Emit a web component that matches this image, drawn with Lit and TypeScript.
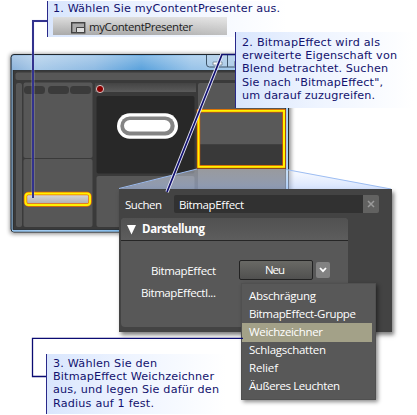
import { LitElement, html, css } from "lit";
import { customElement } from "lit/decorators.js";

const line = (text: string, width: number, kind = "") => html`
  <svg class="line ${kind}" width=${width + 2} height="18">
    <text x="0" y="13" textLength=${width}>${text}</text>
  </svg>`;

const menuItems: [string, number][] = [
  ["Abschrägung", 67],
  ["BitmapEffect-Gruppe", 107],
  ["Weichzeichner", 74],
  ["Schlagschatten", 77],
  ["Relief", 29],
  ["Äußeres Leuchten", 91],
];

@customElement("blend-window")
class BlendWindow extends LitElement {
  static styles = css`
    :host { display: block; }
    svg { display: block; overflow: visible; }
  `;
  render() {
    return html`<svg width="417" height="250" viewBox="0 0 417 250">
      <defs>
        <linearGradient id="glass">
          <stop offset="0" stop-color="#7da9d6" /><stop offset=".1" stop-color="#9fc4e6" />
          <stop offset=".3" stop-color="#82b3e0" /><stop offset=".47" stop-color="#4797d8" />
          <stop offset=".65" stop-color="#8cbce6" /><stop offset="1" stop-color="#a9cbe8" />
        </linearGradient>
        <linearGradient id="shine" x2="0" y2="1">
          <stop offset="0" stop-color="#fff" stop-opacity=".35" /><stop offset="1" stop-color="#fff" stop-opacity=".08" />
        </linearGradient>
        <linearGradient id="head" x2="0" y2="1">
          <stop offset="0" stop-color="#444" /><stop offset="1" stop-color="#5b5b5b" />
        </linearGradient>
        <linearGradient id="bar" x2="0" y2="1">
          <stop offset="0" stop-color="#ddd" /><stop offset="1" stop-color="#aaa" />
        </linearGradient>
        <linearGradient id="beam" x2="0" y2="1">
          <stop offset="0" stop-color="#f2f6ff" stop-opacity=".42" /><stop offset="1" stop-color="#b5cdfc" stop-opacity=".56" />
        </linearGradient>
        <filter id="soft" x="-10%" y="-10%" width="120%" height="120%"><feGaussianBlur stdDeviation="2" /></filter>
      </defs>
      <rect x="10" y="54" width="281" height="180" rx="3" fill="#000" opacity=".45" filter="url(#soft)" />
      <rect x="11" y="54.5" width="277.5" height="177.5" rx="3" fill="url(#glass)" stroke="#20262c" />
      <rect x="12" y="55.5" width="275.5" height="15.5" rx="2" fill="url(#shine)" />
      <path d="M12.5 70V231H287.5V70" fill="none" stroke="#a5d3fa" />
      <path d="M206.500 55v9q0 3 3 3h76v-12M227.500 55v12M249.500 55v12" fill="#b9d2e8" fill-opacity=".5" stroke="#3c5368" />
      <path d="M213 62h9v3h-9zM234.500 61.500h6v5h-6z" fill="#fff" stroke="#6c7d8e" stroke-width=".8" />
      <rect x="13" y="70.500" width="272.500" height="159" fill="#3a3a3a" stroke="#252525" stroke-width=".8" />
      <g fill="#575757">
        <rect x="15.500" y="72.500" width="269" height="7.500" rx="2" />
        <rect x="16" y="83" width="6" height="144" rx="2" />
        <rect x="23.500" y="82.500" width="69" height="75.500" rx="2" />
        <rect x="23.500" y="159" width="69" height="68" rx="2" />
        <rect x="96.500" y="176" width="98" height="51" rx="2" />
        <rect x="198" y="83" width="87" height="27" rx="2" />
        <rect x="198" y="169" width="87" height="30" />
      </g>
      <g fill="#3b3b3b">
        <rect x="24" y="86" width="21" height="8" rx="3.500" />
        <rect x="48" y="86" width="21" height="8" rx="3.500" />
        <rect x="70" y="86" width="21" height="8" rx="3.500" />
      </g>
      <rect x="95" y="83" width="101" height="9" fill="url(#head)" />
      <circle cx="100" cy="89" r="3.600" fill="#8a0000" stroke="#e3d3d3" stroke-width=".9" />
      <rect x="96.500" y="96" width="98" height="77.500" rx="2" fill="#282828" />
      <rect x="117" y="113.300" width="61" height="25.500" rx="12.700" fill="#fff" />
      <rect x="120.300" y="116.600" width="54.400" height="18.800" rx="9.400" fill="#848484" />
      <rect x="124" y="120" width="46.500" height="11.500" rx="5.800" fill="#fff" />
      <rect x="25.500" y="193.500" width="64.500" height="11.500" rx="3" fill="url(#bar)" stroke="#f06a00" stroke-width="3.400" />
      <rect x="25.500" y="193.500" width="64.500" height="11.500" rx="3" fill="none" stroke="#fff200" stroke-width="2" />

      <path d="M197 169H285.500L391 189H119Z" fill="url(#beam)" />
      <path d="M197 169L119 188.500M286 169.500L391 189" fill="none" stroke="#9dbdf2" />
      <rect x="198.500" y="110.500" width="85" height="34" fill="#595959" />
      <rect x="198.500" y="144.500" width="85" height="22" fill="#393939" />
      <rect x="198.500" y="110.800" width="85.500" height="56" fill="none" stroke="#e25500" stroke-width="3.400" />
      <rect x="198.500" y="110.800" width="85.500" height="56" fill="none" stroke="#fff200" stroke-width="2" />
    </svg>`;
  }
}

@customElement("search-panel")
class SearchPanel extends LitElement {
  static styles = css`
    :host { display: block; box-sizing: border-box; width: 273px; height: 143px; padding: 6px 13px 0 2px;
      background: #434343; box-shadow: 2px 3px 4px rgba(0,0,0,.5); }
    .line { display: block; flex: none; overflow: visible; font: 11.500px "Open Sans", "Noto Sans", sans-serif; fill: #fff; }
    .strong { font-weight: 700; }
    .search { display: flex; height: 18px; padding-left: 4px; }
    .search > .line { margin-top: 1px; }
    .field { flex: 1; margin-left: 10px; padding: 1px 0 0 5px; background: #313131; border-radius: 2px 0 0 2px; }
    .clear { width: 16px; background: #626261; border-radius: 0 2px 2px 0; display: grid; place-items: center; }
    .section { width: 227px; height: 109px; margin-top: 5px; background: #585858; border-radius: 4px; }
    .head { display: flex; align-items: flex-start; height: 23px; box-sizing: border-box; padding: 2px 0 0 6px;
      border-bottom: 1px solid #262626; background: linear-gradient(#515151, #5d5d5d); border-radius: 4px 4px 0 0; }
    .tri { width: 9px; height: 10px; margin: 5px 6px 0 0; }
    .row { display: flex; align-items: center; height: 20px; margin-top: 19px; }
    .label { display: flex; justify-content: flex-end; width: 97px; padding-top: 1px; }
    .button { display: flex; justify-content: center; box-sizing: border-box; width: 74px; height: 20px; margin-left: 21px;
      border: 1px solid #222; border-radius: 2px; background: linear-gradient(#696965, #50504f); }
    .arrow { width: 14px; height: 16px; margin-left: 3px; border-radius: 2px; background: #828282; display: grid; place-items: center; }
    .second { margin-top: 2px; }
  `;
  render() {
    return html`
      <div class="search">${line("Suchen", 37)}
        <div class="field">${line("BitmapEffect", 65)}</div>
        <div class="clear"><svg width="8" height="8"><path d="M1 1l6 6M7 1L1 7" stroke="#9b9b9b" stroke-width="1.500" /></svg></div>
      </div>
      <div class="section">
        <div class="head"><svg class="tri"><path d="M0 0H9L4.500 9.500Z" fill="#fff" /></svg>${line("Darstellung", 63, "strong")}</div>
        <div class="row">
          <div class="label">${line("BitmapEffect", 65)}</div>
          <div class="button">${line("Neu", 20)}</div>
          <div class="arrow"><svg width="8" height="6"><path d="M1 1l3 3.200L7 1" fill="none" stroke="#fff" stroke-width="1.800" /></svg></div>
        </div>
        <div class="row second"><div class="label">${line("BitmapEffectI...", 75)}</div></div>
      </div>`;
  }
}

@customElement("effect-menu")
class EffectMenu extends LitElement {
  static styles = css`
    :host { display: block; box-sizing: border-box; width: 135px; height: 117px; padding: 3px 3px 0 0;
      background: #585858; border: 1px solid #505050; box-shadow: 2px 2px 4px rgba(0,0,0,.45); }
    .item { height: 18px; padding-left: 7px; }
    .on { background: #a3a188; box-shadow: 0 1px #a3a188; }
    .line { display: block; overflow: visible; font: 11.500px "Open Sans", "Noto Sans", sans-serif; fill: #fff; }
  `;
  render() {
    return menuItems.map(([t, w], i) => html`<div class="item ${i === 2 ? "on" : ""}">${line(t, w)}</div>`);
  }
}

@customElement("app-root")
class AppRoot extends LitElement {
  static styles = css`
    :host { display: block; position: relative; width: 417px; height: 415px; overflow: hidden; background: #fff; }
    blend-window, search-panel, effect-menu, .callout, .wires { position: absolute; }
    blend-window, .wires { left: 0; top: 0; }
    search-panel { left: 119px; top: 189px; }
    effect-menu { left: 241px; top: 283px; }
    .line { display: block; overflow: visible; font: 11.200px "DejaVu Sans", sans-serif; fill: #12126e; }
    .line.ui { font: 11.500px "Open Sans", "Noto Sans", sans-serif; fill: #222; }
    .callout { box-sizing: border-box; border-left: 1px solid #29298a;
      background: linear-gradient(90deg, #d9e6fd, #eef4ff 45%, #fff); }
    .callout > .line { height: 13.200px; }
    .one { left: 47px; top: 1px; width: 240px; height: 36px; padding-left: 5px; }
    .callout.one > .line { height: 16px; margin-top: -2px; }
    .two { left: 235px; top: 32px; width: 178px; height: 76px; padding: 1px 0 0 6px; }
    .three { left: 46px; top: 354px; width: 180px; height: 60px; padding-left: 6px; }
    .chip { display: flex; box-sizing: border-box; width: 174px; height: 18px; margin-top: 2px; padding-left: 18px;
      background: linear-gradient(90deg, rgba(255,255,255,0) 50%, rgba(255,255,255,.25)), linear-gradient(#dedede, #aaa); }
    .chip .line { margin-top: 1px; }
    .glyph { width: 15px; height: 12px; margin: 5px 3px 0 0; }
  `;
  render() {
    return html`
      <blend-window></blend-window>
      <search-panel></search-panel>
      <effect-menu></effect-menu>
      <div class="callout one">
        ${line("1. Wählen Sie myContentPresenter aus.", 227)}
        <div class="chip">
          <svg class="glyph"><path d="M.7.700h13v10h-13z" fill="#aaa" stroke="#444" stroke-width="1.400" /><path d="M5.500 5.500h8v5h-8z" fill="#ddd" stroke="#444" /></svg>
          ${line("myContentPresenter", 104, "ui")}
        </div>
      </div>
      <div class="callout two">
        ${line("2. BitmapEffect wird als", 138)}
        ${line("erweiterte Eigenschaft von", 155)}
        ${line("Blend betrachtet. Suchen", 146)}
        ${line('Sie nach "BitmapEffect",', 141)}
        ${line("um darauf zuzugreifen.", 133)}
      </div>
      <div class="callout three">
        ${line("3. Wählen Sie den", 104)}
        ${line("BitmapEffect Weichzeichner", 161)}
        ${line("aus, und legen Sie dafür den", 166)}
        ${line("Radius auf 1 fest.", 101)}
      </div>
      <svg class="wires" width="417" height="415" fill="none">
        <path d="M47 21H33V198" stroke="#dcdcf4" stroke-width="3" opacity=".4" />
        <path d="M47 21H33V198" stroke="#32328e" stroke-width="2" />
        <path d="M222 54.500L167 192" stroke="#e4e4f4" stroke-width="3.400" />
        <path d="M235 54.500H222L167 192" stroke="#10106e" stroke-width="1.700" />
        <path d="M46 376.500H32.500V338.300H243" stroke="#0b0b72" stroke-width="1.300" />
      </svg>`;
  }
}
